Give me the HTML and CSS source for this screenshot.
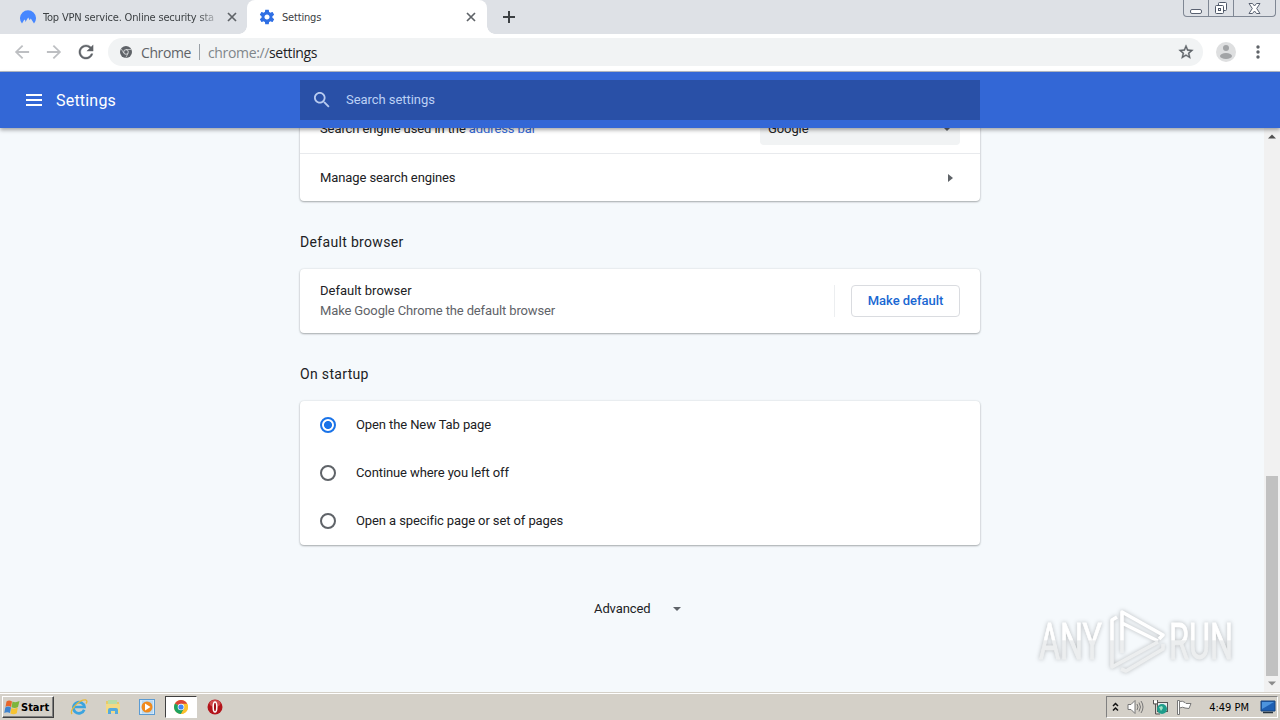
FILE: index.html
```html
<!DOCTYPE html>
<html lang="en">
<head>
    <meta charset="UTF-8">
    <meta name="viewport" content="width=device-width, initial-scale=1.0">
    <title>Settings</title>
    <link rel="stylesheet" href="styles.css">
</head>
<body>
    <div class="tabstrip">
        <div class="tab">
            <svg class="tab-icon" width="16" height="16" viewBox="0 0 16 16"><path d="M2 14.5A8 8 0 1 1 14 14.5L10.8 9.4 9.7 11.2 8.2 8.6 5.4 13 5.2 11.2 4.4 10.6z" fill="#4687ff"/></svg>
            <span class="tab-title tab-title-fade">Top VPN service. Online security sta</span>
            <svg class="tab-close" width="10" height="10" viewBox="0 0 10 10"><path d="M1 1l8 8M9 1l-8 8" stroke="#5f6368" stroke-width="1.7"/></svg>
        </div>
        <div class="tab active">
            <svg class="tab-icon" width="16" height="16" viewBox="1 1 22 22"><path fill="#2f6fe4" d="M19.43 12.98c.04-.32.07-.64.07-.98s-.03-.66-.07-.98l2.11-1.65c.19-.15.24-.42.12-.64l-2-3.46c-.12-.22-.39-.3-.61-.22l-2.49 1c-.52-.4-1.08-.73-1.69-.98l-.38-2.65C14.46 2.18 14.25 2 14 2h-4c-.25 0-.46.18-.49.42l-.38 2.65c-.61.25-1.17.59-1.69.98l-2.49-1c-.23-.09-.49 0-.61.22l-2 3.46c-.13.22-.07.49.12.64l2.11 1.65c-.04.32-.07.65-.07.98s.03.66.07.98l-2.11 1.65c-.19.15-.24.42-.12.64l2 3.46c.12.22.39.3.61.22l2.49-1c.52.4 1.08.73 1.69.98l.38 2.65c.03.24.24.42.49.42h4c.25 0 .46-.18.49-.42l.38-2.65c.61-.25 1.17-.59 1.69-.98l2.49 1c.23.09.49 0 .61-.22l2-3.46c.12-.22.07-.49-.12-.64l-2.11-1.65zM12 15.5c-1.93 0-3.5-1.57-3.5-3.5s1.57-3.5 3.5-3.5 3.5 1.57 3.5 3.5-1.57 3.5-3.5 3.5z"/></svg>
            <span class="tab-title">Settings</span>
            <svg class="tab-close" width="10" height="10" viewBox="0 0 10 10"><path d="M1 1l8 8M9 1l-8 8" stroke="#5f6368" stroke-width="1.7"/></svg>
        </div>
        <svg class="new-tab" width="12" height="12" viewBox="0 0 12 12"><path d="M6 0v12M0 6h12" stroke="#3c4043" stroke-width="2"/></svg>
        <div class="window-buttons">
            <span class="win-btn"><svg class="win-min" width="14" height="12" viewBox="0 0 14 12"><rect x="1.5" y="6.500" width="11" height="4" rx="1.500" fill="#fff" stroke="#5a6272"/></svg></span>
            <span class="win-btn"><svg width="14" height="14" viewBox="0 0 14 14"><g fill="#fff" stroke="#4f5868"><rect x="4.500" y="1.500" width="8" height="8" rx="1"/><rect x="1.500" y="4.500" width="8" height="8" rx="1"/><rect x="4.500" y="7.500" width="2" height="2"/></g></svg></span>
            <span class="win-btn win-close"><svg width="13" height="11" viewBox="0 0 13 11"><path d="M1 .5h3.500l2 2.500 2-2.500H12L8.700 5.500l3.300 5H8.500l-2-2.500-2 2.500H1l3.300-5z" fill="#fff" stroke="#5a6272"/></svg></span>
        </div>
    </div>

    <div class="toolbar">
        <svg class="nav-icon" width="16" height="16" viewBox="3 3 18 18"><path fill="#bdbfc2" d="M20 11H7.830l5.590-5.590L12 4l-8 8 8 8 1.410-1.410L7.830 13H20v-2z"/></svg>
        <svg class="nav-icon" width="16" height="16" viewBox="3 3 18 18"><path fill="#bdbfc2" d="M12 4l-1.410 1.410L16.170 11H4v2h12.170l-5.580 5.590L12 20l8-8z"/></svg>
        <svg class="nav-icon" width="16" height="16" viewBox="3 3 18 18"><path fill="#5f6368" stroke="#5f6368" stroke-width=".4" d="M17.650 6.350C16.200 4.900 14.210 4 12 4c-4.420 0-7.990 3.580-7.990 8s3.570 8 7.990 8c3.730 0 6.840-2.550 7.730-6h-2.080c-.82 2.330-3.040 4-5.650 4-3.310 0-6-2.690-6-6s2.690-6 6-6c1.660 0 3.140.69 4.220 1.780L13 11h7V4l-2.350 2.350z"/></svg>
        <div class="omnibox">
            <svg width="12" height="12" viewBox="0 0 12 12"><circle cx="6" cy="6" r="6" fill="#5f6368"/><circle cx="6" cy="6" r="2.300" fill="#5f6368" stroke="#f1f3f4" stroke-width=".8"/><path d="M6 3.500h5.300M3.800 7.200L1.300 3M8.100 7.400L5.800 11.600" stroke="#f1f3f4" stroke-width=".6"/></svg>
            <span class="origin">Chrome</span>
            <span class="divider"></span>
            <span class="url"><span class="scheme">chrome://</span>settings</span>
            <svg class="star" width="16" height="16" viewBox="1 1 22 22"><path fill="#5f6368" stroke="#5f6368" stroke-width=".5" d="M22 9.240l-7.190-.62L12 2 9.190 8.630 2 9.240l5.460 4.730L5.820 21 12 17.270 18.180 21l-1.630-7.030L22 9.240zM12 15.400l-3.760 2.270 1-4.280-3.320-2.880 4.380-.38L12 6.100l1.710 4.040 4.380.38-3.320 2.880 1 4.280L12 15.400z"/></svg>
        </div>
        <svg class="avatar" width="20" height="20" viewBox="0 0 20 20"><circle cx="10" cy="10" r="10" fill="#dedfe0"/><circle cx="10" cy="6" r="3" fill="#a2a4a6"/><ellipse cx="10" cy="14" rx="6" ry="3" fill="#a2a4a6"/></svg>
        <svg class="menu-dots" width="4" height="14" viewBox="0 0 4 14"><g fill="#5f6368"><circle cx="2" cy="2" r="1.700"/><circle cx="2" cy="7" r="1.700"/><circle cx="2" cy="12" r="1.700"/></g></svg>
    </div>

    <header class="header">
        <div class="header-left">
            <svg width="16" height="12" viewBox="0 0 16 12"><path d="M0 1h16M0 6h16M0 11h16" stroke="#fff" stroke-width="2"/></svg>
            <h1>Settings</h1>
        </div>
        <div class="search">
            <svg width="16" height="16" viewBox="3 3 18 18"><path fill="#b8cbf0" d="M15.500 14h-.79l-.28-.27C15.410 12.590 16 11.110 16 9.500 16 5.910 13.090 3 9.500 3S3 5.910 3 9.500 5.910 16 9.500 16c1.610 0 3.090-.59 4.230-1.570l.27.28v.79l5 4.990L20.490 19l-4.990-5zm-6 0C7.010 14 5 11.990 5 9.500S7.010 5 9.500 5 14 7.010 14 9.500 11.990 14 9.500 14z"/></svg>
            <span>Search settings</span>
        </div>
    </header>

    <div class="page">
        <main class="content">
            <section class="card">
                <div class="row">
                    <span class="engine-label">Search engine used in the <a href="#">address bar</a></span>
                    <div class="select">
                        <span>Google</span>
                        <svg width="8" height="4" viewBox="0 0 8 4"><path d="M0 0h8L4 4z" fill="#5f6368"/></svg>
                    </div>
                </div>
                <div class="row row-line">
                    <span class="manage">Manage search engines</span>
                    <svg class="row-arrow" width="5" height="8" viewBox="0 0 5 8"><path d="M0 0l5 4-5 4z" fill="#5f6368"/></svg>
                </div>
            </section>

            <h2>Default browser</h2>
            <section class="card">
                <div class="row row-default">
                    <div class="two-line">
                        <span>Default browser</span>
                        <span class="secondary">Make Google Chrome the default browser</span>
                    </div>
                    <div class="action">
                        <button>Make default</button>
                    </div>
                </div>
            </section>

            <h2>On startup</h2>
            <section class="card">
                <div class="row option"><span class="radio checked"></span><span class="option-label">Open the New Tab page</span></div>
                <div class="row option"><span class="radio"></span><span class="option-label">Continue where you left off</span></div>
                <div class="row option"><span class="radio"></span><span class="option-label">Open a specific page or set of pages</span></div>
            </section>

            <div class="advanced">
                <span>Advanced</span>
                <svg width="8" height="4" viewBox="0 0 8 4"><path d="M0 0h8L4 4z" fill="#5f6368"/></svg>
            </div>
        </main>

        <div class="scrollbar">
            <svg width="8" height="5" viewBox="0 0 8 5"><path d="M0 4.500L4 .5l4 4z" fill="#505050"/></svg>
            <div class="thumb"></div>
            <svg width="8" height="5" viewBox="0 0 8 5"><path d="M0 .5h8l-4 4z" fill="#8b8b8b"/></svg>
        </div>

        <div class="watermark">
            <svg width="210" height="76" viewBox="0 0 210 76">
                <defs>
                    <linearGradient id="fade" x1="0" y1="0" x2="0" y2="76" gradientUnits="userSpaceOnUse">
                        <stop offset=".5" stop-color="#fff"/>
                        <stop offset=".51" stop-color="#eceeef"/>
                    </linearGradient>
                </defs>
                <g class="mark-text" fill="url(#fade)" stroke="url(#fade)" stroke-width=".8">
                    <text x="9" y="57" textLength="63" lengthAdjust="spacingAndGlyphs">ANY</text>
                    <text x="139" y="57" textLength="64" lengthAdjust="spacingAndGlyphs">RUN</text>
                </g>
                <g fill="none" stroke="url(#fade)" stroke-width="3.600" stroke-linejoin="round">
                    <path d="M92 51V10l41 23-4 4M92 21l36 18"/>
                    <path d="M87 15l-5 3v47l46-25M91 67l5 2 37-22v-5"/>
                </g>
            </svg>
        </div>
    </div>

    <footer class="taskbar">
        <div class="start">
            <svg width="16" height="16" viewBox="0 0 16 16"><path d="M2.500 2.500Q5 .5 8 2.500L7 8Q4 6 1.500 8z" fill="#e8662a"/><path d="M8.500 2.500q3 1.500 7-.5L14 8q-3 2-6.500 .3z" fill="#7db53c"/><path d="M1.300 8.500Q4 6.500 7 8.500l-1 5.500Q3 12.500.3 14z" fill="#3f83ce"/><path d="M7.400 9q3 1.500 6.400-.5l-1 5.700q-3 2-6.400 .3z" fill="#f6c332"/></svg>
            <span>Start</span>
        </div>
        <div class="quick">
            <span class="task"><svg width="18" height="18" viewBox="0 0 18 18"><path d="M14.200 11.700A5.600 5.600 0 1 1 14.500 9H5" fill="none" stroke="#3ba4df" stroke-width="2.700"/><path d="M2 16C-1 12 10 1 16 2c1.500.5.800 2.500 0 3.500" fill="none" stroke="#e8b93a" stroke-width="1.300"/></svg></span>
            <span class="task"><svg width="18" height="18" viewBox="0 0 18 18"><path d="M2 3h5l1 1h7v10H2z" fill="#e8ca68"/><path d="M4 2h9v5H4z" fill="#b9dda7"/><path d="M2 6h14v9H2z" fill="#f3da84"/><path d="M4 16v-4q0-2 2-2h6q2 0 2 2v4h-3v-3H7v3z" fill="#55aadd"/></svg></span>
            <span class="task"><svg width="18" height="18" viewBox="0 0 18 18"><rect x="1.500" y="1.500" width="15" height="15" fill="#d9ebfa" stroke="#5b9bd3"/><rect x="4" y="2.500" width="11" height="13" fill="#b7d8f2"/><circle cx="9" cy="9" r="5.500" fill="#f08a1d"/><path d="M7 5.500L12.500 9 7 12.500z" fill="#fff"/></svg></span>
            <span class="task pressed"><svg width="14" height="14" viewBox="0 0 14 14"><circle cx="7" cy="7" r="7" fill="#fbc02d"/><path d="M7 7L.94 3.500A7 7 0 0 1 13.060 3.500z" fill="#db4437"/><path d="M7 7L.94 3.500A7 7 0 0 0 7 14l3-5.300z" fill="#1da261"/><path d="M7 3.500h6.060L9 9z" fill="#db4437"/><path d="M7 3.700h6.200A7 7 0 0 1 7 14l3-5.200z" fill="#fbc02d"/><circle cx="7" cy="7" r="3.300" fill="#fff"/><circle cx="7" cy="7" r="2.600" fill="#4285f4"/></svg></span>
            <span class="task"><svg width="16" height="16" viewBox="0 0 16 16"><circle cx="8" cy="8" r="7.500" fill="#b3141b"/><ellipse cx="8" cy="4.500" rx="5.500" ry="3.500" fill="#d04a4d"/><ellipse cx="8" cy="8" rx="1.800" ry="5" fill="#a20f16" stroke="#fff" stroke-width="1.500"/></svg></span>
        </div>
        <div class="tray">
            <svg class="chevrons" width="7" height="10" viewBox="0 0 7 10"><path d="M1 4l2.500-2.500L6 4M1 8.500L3.500 6 6 8.500" fill="none" stroke="#111" stroke-width="1.500"/></svg>
            <svg class="speaker" width="17" height="16" viewBox="0 0 17 16"><path d="M1 5.500h3l4-4v13l-4-4H1z" fill="#fff" stroke="#777"/><path d="M10 5q2 3 0 6M12 3.500q3 4.500 0 9M14 2q4 6 0 12" fill="none" stroke="#777"/></svg>
            <svg class="network" width="17" height="16" viewBox="0 0 17 16"><rect x="5.500" y="3.500" width="10" height="9" fill="#e9eef0" stroke="#555"/><path d="M1.500 1v4h4V1M3.500 5v10H8" fill="none" stroke="#555"/><path d="M2 1.500h3V4H2z" fill="#fff"/><circle cx="10" cy="10" r="5" fill="#1f9d8b"/><path d="M7 8l3-1 1 2-2 3zM12 11l2-1" fill="#9be0c4"/></svg>
            <svg class="flag" width="16" height="16" viewBox="0 0 16 16"><path d="M1.500 15.500v-14h2v14z" fill="#fff" stroke="#777"/><path d="M3.500 2.500q3-1 5.500 1l1 1h5l-2 5-4-.5q-2-1.500-5.500 0z" fill="#fff" stroke="#777"/></svg>
            <span class="clock">4:49 PM</span>
            <svg class="desktop" width="16" height="14" viewBox="0 0 16 14"><path d="M1 1h14v10H1z" fill="#1d5fb3" stroke="#18457d"/><path d="M2 2h12L2 9z" fill="#4c94de"/><path d="M3 12.500h10" stroke="#26333f" stroke-width="1.500"/></svg>
        </div>
    </footer>
</body>
</html>
```

FILE: styles.css
```css
* {
    box-sizing: border-box;
}
body {
    margin: 0;
    width: 1280px;
    height: 720px;
    overflow: hidden;
    display: flex;
    flex-direction: column;
    font-family: Roboto, "Liberation Sans", sans-serif;
    font-size: 13px;
    color: #202124;
    background-color: #f5f9fc;
}
svg {
    display: block;
    flex: none;
}
span {
    white-space: nowrap;
}

/* Tabs */
.tabstrip {
    height: 34px;
    flex: none;
    display: flex;
    align-items: center;
    background-color: #dee1e6;
}
.tab {
    width: 247px;
    height: 34px;
    display: flex;
    align-items: center;
    padding: 0 10px 0 20px;
    font-family: "DejaVu Sans Condensed", "DejaVu Sans", sans-serif;
    font-size: 11px;
    letter-spacing: -0.18px;
    color: #3c4043;
}
.tab.active {
    position: relative;
    width: 240px;
    padding: 0 11px 0 12px;
    background-color: #fff;
    border-radius: 8px 8px 0 0;
}
.tab.active::before,
.tab.active::after {
    content: "";
    position: absolute;
    bottom: 0;
    width: 8px;
    height: 8px;
}
.tab.active::before {
    left: -8px;
    background: radial-gradient(circle at 0 0, transparent 7.5px, #fff 8px);
}
.tab.active::after {
    right: -8px;
    background: radial-gradient(circle at 100% 0, transparent 7.5px, #fff 8px);
}
.tab-title {
    flex: 1;
    margin-left: 7px;
}
.tab-title-fade {
    -webkit-mask-image: linear-gradient(to right, #000 155px, transparent 178px);
    mask-image: linear-gradient(to right, #000 155px, transparent 178px);
}
.tab-close {
    margin-left: 10px;
}
.new-tab {
    margin-left: 16px;
}
.window-buttons {
    display: flex;
    align-self: flex-start;
    height: 17px;
    margin-left: auto;
    margin-right: 4px;
    border: 1px solid #7f8794;
    border-top: none;
    border-radius: 0 0 4px 4px;
}
.win-btn {
    width: 25px;
    display: flex;
    align-items: center;
    justify-content: center;
    border-right: 1px solid #7f8794;
}
.win-min {
    margin-top: 1px;
}
.win-close {
    width: 41px;
    border-right: none;
}

/* Toolbar */
.toolbar {
    height: 38px;
    flex: none;
    display: flex;
    align-items: center;
    padding: 0 20px 1px 14px;
    background-color: #fff;
    border-bottom: 1px solid #b6bcc6;
}
.nav-icon {
    margin-right: 16px;
}
.omnibox {
    flex: 1;
    height: 28px;
    margin-left: -2px;
    display: flex;
    align-items: center;
    padding: 0 9px 0 12px;
    border-radius: 14px;
    background-color: #f1f3f4;
    font-family: "Open Sans", "Noto Sans", sans-serif;
    font-size: 14px;
}
.origin {
    margin-left: 9px;
    letter-spacing: -0.4px;
    color: #5f6368;
}
.divider {
    width: 1px;
    height: 16px;
    margin: 0 8px;
    background-color: #9aa0a6;
}
.url {
    letter-spacing: -0.35px;
}
.scheme {
    color: #80868b;
}
.star {
    margin-left: auto;
}
.avatar {
    margin-left: 13px;
}
.menu-dots {
    margin-left: 20px;
}

/* Settings header */
.header {
    position: relative;
    z-index: 1;
    height: 56px;
    flex: none;
    display: flex;
    align-items: center;
    background-color: #3367d6;
    box-shadow: 0 2px 4px rgba(0, 0, 0, 0.35);
    color: #fff;
}
.header-left {
    width: 300px;
    display: flex;
    align-items: center;
    padding-left: 26px;
}
.header h1 {
    margin: 0 0 0 14px;
    font-size: 16px;
    font-weight: 400;
    letter-spacing: 0.2px;
}
.search {
    width: 680px;
    height: 40px;
    display: flex;
    align-items: center;
    padding-left: 14px;
    background-color: #2950a7;
    color: #bcd0f5;
}
.search span {
    margin-left: 16px;
    padding-bottom: 2px;
    letter-spacing: -0.05px;
}

/* Page content */
.page {
    position: relative;
    flex: 1;
    min-height: 0;
    display: flex;
    justify-content: space-between;
    overflow: hidden;
    background-color: #f5f9fc;
}
.content {
    width: 680px;
    margin: -23px 0 0 300px;
    letter-spacing: -0.1px;
}
.card {
    background-color: #fff;
    border-radius: 4px;
    box-shadow: 0 1px 2px rgba(60, 64, 67, 0.4), 0 0 2px rgba(60, 64, 67, 0.15);
}
.row {
    height: 48px;
    display: flex;
    align-items: center;
    padding: 0 20px;
}
.row-line {
    border-top: 1px solid #e8eaed;
}
.row a {
    color: #3367d6;
    text-decoration: none;
}
.engine-label,
.select span,
.option-label,
.advanced span {
    padding-bottom: 2px;
}
.select {
    width: 200px;
    height: 32px;
    margin-left: auto;
    display: flex;
    align-items: center;
    justify-content: space-between;
    padding: 0 9px 0 8px;
    border-radius: 4px;
    background-color: #f1f3f4;
}
.row-arrow {
    margin: 0 7px 0 auto;
}
h2 {
    margin: 0;
    height: 68px;
    padding-top: 14px;
    line-height: 54px;
    font-size: 14px;
    font-weight: 400;
    letter-spacing: 0.33px;
}
.row-default {
    height: 64px;
}
.two-line {
    display: flex;
    flex-direction: column;
    line-height: 20px;
}
.two-line span:first-child {
    letter-spacing: 0;
}
.secondary {
    letter-spacing: -0.13px;
    color: #5f6368;
}
.action {
    margin-left: auto;
    padding-left: 16px;
    border-left: 1px solid #eceef0;
}
.action button {
    display: block;
    width: 109px;
    height: 32px;
    padding: 0 0 2px;
    border: 1px solid #dadce0;
    border-radius: 4px;
    background-color: #fff;
    font-family: inherit;
    font-size: 13px;
    font-weight: 500;
    letter-spacing: -0.05px;
    color: #1967d2;
}
.option {
    gap: 20px;
}
.radio {
    width: 16px;
    height: 16px;
    border: 2px solid #5f6368;
    border-radius: 50%;
}
.radio.checked {
    border-color: #1a73e8;
    background: radial-gradient(circle, #1a73e8 3.6px, #fff 4.4px);
}
.advanced {
    height: 48px;
    margin-top: 40px;
    display: flex;
    align-items: center;
    gap: 22px;
    padding-left: 294px;
}

/* Scrollbar */
.scrollbar {
    width: 16px;
    display: flex;
    flex-direction: column;
    align-items: center;
    padding: 6px 0;
    background-color: #f1f1f1;
}
.thumb {
    width: 12px;
    height: 200px;
    margin: auto 0 5px;
    background-color: #c1c1c1;
}

.watermark {
    position: absolute;
    right: 40px;
    bottom: 14px;
    filter: drop-shadow(0 0 2px rgba(0, 0, 0, 0.25));
}
.mark-text {
    font-family: Roboto, sans-serif;
    font-size: 50px;
}

/* Taskbar */
.taskbar {
    height: 28px;
    flex: none;
    display: flex;
    align-items: center;
    padding: 1px 2px 0 2px;
    background-color: #d4d0c8;
    border-top: 1px solid #d4d0c8;
    box-shadow: inset 0 1px 0 #fff;
    font-family: "DejaVu Sans Condensed", sans-serif;
    font-size: 11px;
    color: #000;
}
.start {
    width: 52px;
    height: 22px;
    display: flex;
    align-items: center;
    gap: 1px;
    padding-left: 1px;
    border: 1px solid;
    border-color: #fff #404040 #404040 #fff;
    box-shadow: inset -1px -1px 0 #808080;
    font-weight: bold;
}
.quick {
    display: flex;
    margin-left: 9px;
    gap: 2px;
}
.task {
    width: 32px;
    height: 22px;
    display: flex;
    align-items: center;
    justify-content: center;
}
.pressed {
    background-color: #fff;
    border: 1px solid;
    border-color: #404040 #fff #fff #404040;
}
.tray {
    width: 172px;
    height: 22px;
    margin-left: auto;
    display: flex;
    align-items: center;
    padding: 0 1px 0 5px;
    border: 1px solid;
    border-color: #808080 #fff #fff #808080;
}
.speaker {
    margin-left: 8px;
}
.network {
    margin-left: 8px;
}
.flag {
    margin-left: 7px;
}
.clock {
    margin-left: auto;
    margin-right: 11px;
}
```
